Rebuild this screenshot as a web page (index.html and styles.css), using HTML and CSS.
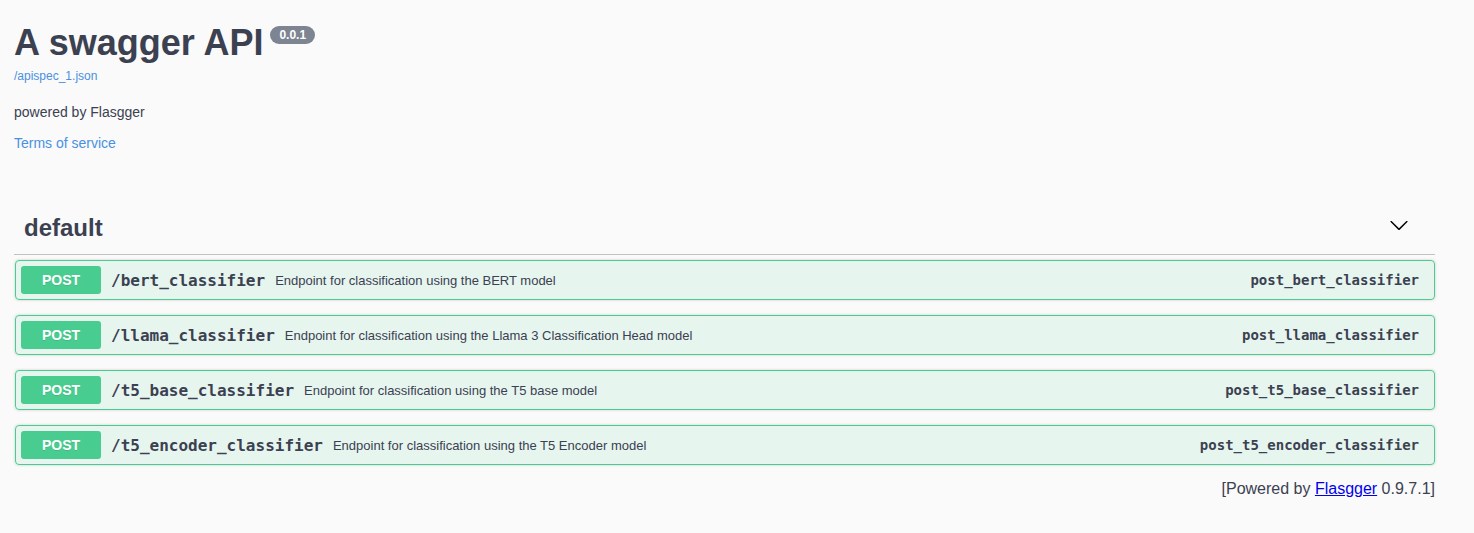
FILE: index.html
```html
<!DOCTYPE html>
<html lang="en">
<head>
<meta charset="utf-8">
<title>A swagger API</title>
<link rel="stylesheet" href="styles.css">
</head>
<body>
<div class="wrapper">
  <section class="info">
    <h2 class="title">A swagger API <small class="version"><span>0.0.1</span></small></h2>
    <a class="spec-link" href="#">/apispec_1.json</a>
    <p class="description">powered by Flasgger</p>
    <a class="tos" href="#">Terms of service</a>
  </section>

  <section class="tag-section">
    <h4 class="opblock-tag">
      <span class="tag-name">default</span>
      <svg class="arrow" width="20" height="20" viewBox="0 0 20 20" aria-hidden="true"><path d="M17.418 6.109c.272-.268.709-.268.979 0s.271.701 0 .969l-7.908 7.83c-.27.268-.707.268-.979 0l-7.908-7.830c-.27-.268-.27-.701 0-.969.271-.268.709-.268.979 0L10 13.25l7.418-7.141z" fill="#000"/></svg>
    </h4>

    <div class="opblock">
      <span class="method">POST</span>
      <span class="path">/bert_classifier</span>
      <span class="summary">Endpoint for classification using the BERT model</span>
      <span class="op-id">post_bert_classifier</span>
    </div>
    <div class="opblock">
      <span class="method">POST</span>
      <span class="path">/llama_classifier</span>
      <span class="summary">Endpoint for classification using the Llama 3 Classification Head model</span>
      <span class="op-id">post_llama_classifier</span>
    </div>
    <div class="opblock">
      <span class="method">POST</span>
      <span class="path">/t5_base_classifier</span>
      <span class="summary">Endpoint for classification using the T5 base model</span>
      <span class="op-id">post_t5_base_classifier</span>
    </div>
    <div class="opblock">
      <span class="method">POST</span>
      <span class="path">/t5_encoder_classifier</span>
      <span class="summary">Endpoint for classification using the T5 Encoder model</span>
      <span class="op-id">post_t5_encoder_classifier</span>
    </div>
  </section>

  <footer class="footer">[Powered by <a href="#">Flasgger</a> 0.9.7.1]</footer>
</div>
</body>
</html>
```

FILE: styles.css
```css
html, body {
  margin: 0;
  padding: 0;
  background: #fafafa;
}

body {
  font-family: "Liberation Sans", Arial, sans-serif;
  color: #3b4151;
}

.wrapper {
  box-sizing: border-box;
  width: 1435px;
  padding: 0 0 0 14px;
}

.info {
  display: flex;
  flex-direction: column;
  align-items: flex-start;
}

.title {
  margin: 22px 0 0;
  font-size: 36px;
  line-height: 42px;
  font-weight: 700;
  color: #3b4151;
  display: flex;
  align-items: flex-start;
}

.version {
  margin: 4px 0 0 7px;
  background: #7d8492;
  border-radius: 57px;
  padding: 2px 9px;
  font-size: 12px;
  line-height: 14px;
  font-weight: 700;
  color: #fff;
}

.spec-link {
  margin-top: 5px;
  font-size: 12px;
  line-height: 14px;
  color: #4990e2;
  text-decoration: none;
}

.description {
  margin: 21px 0 0;
  font-size: 14px;
  line-height: 16px;
  color: #3b4151;
}

.tos {
  margin-top: 15px;
  font-size: 14px;
  line-height: 16px;
  color: #4990e2;
  text-decoration: none;
}

.tag-section {
  margin-top: 51px;
}

.opblock-tag {
  margin: 0 0 5px;
  height: 32px;
  padding: 10px 26px 10px 10px;
  display: flex;
  align-items: center;
  border-bottom: 1px solid rgba(59, 65, 81, 0.3);
  font-size: 24px;
  font-weight: 700;
  color: #3b4151;
}

.tag-name {
  flex: 1;
  line-height: 32px;
}

.arrow {
  display: block;
  margin-bottom: 6px;
}

.opblock {
  box-sizing: border-box;
  height: 40px;
  margin: 0 0 15px 1px;
  padding: 5px;
  display: flex;
  align-items: center;
  border: 1px solid #49cc90;
  border-radius: 4px;
  background: rgba(73, 204, 144, 0.1);
  box-shadow: 0 0 3px rgba(0, 0, 0, 0.19);
}

.method {
  min-width: 80px;
  padding: 6px 0;
  border-radius: 3px;
  background: #49cc90;
  color: #fff;
  font-size: 14px;
  line-height: 16px;
  font-weight: 700;
  text-align: center;
  text-shadow: 0 1px 0 rgba(0, 0, 0, 0.1);
}

.path {
  padding: 0 10px;
  font-family: "DejaVu Sans Mono", "Liberation Mono", monospace;
  font-size: 16px;
  font-weight: 700;
  color: #3b4151;
}

.summary {
  flex: 1;
  font-size: 13px;
  color: #3b4151;
}

.op-id {
  padding-right: 10px;
  font-family: "DejaVu Sans Mono", "Liberation Mono", monospace;
  font-size: 14px;
  font-weight: 700;
  color: #3b4151;
}

.footer {
  text-align: right;
  font-size: 16px;
  line-height: 18px;
  color: #3b4151;
}

.footer a {
  color: #0000ee;
  text-decoration: underline;
}
```
